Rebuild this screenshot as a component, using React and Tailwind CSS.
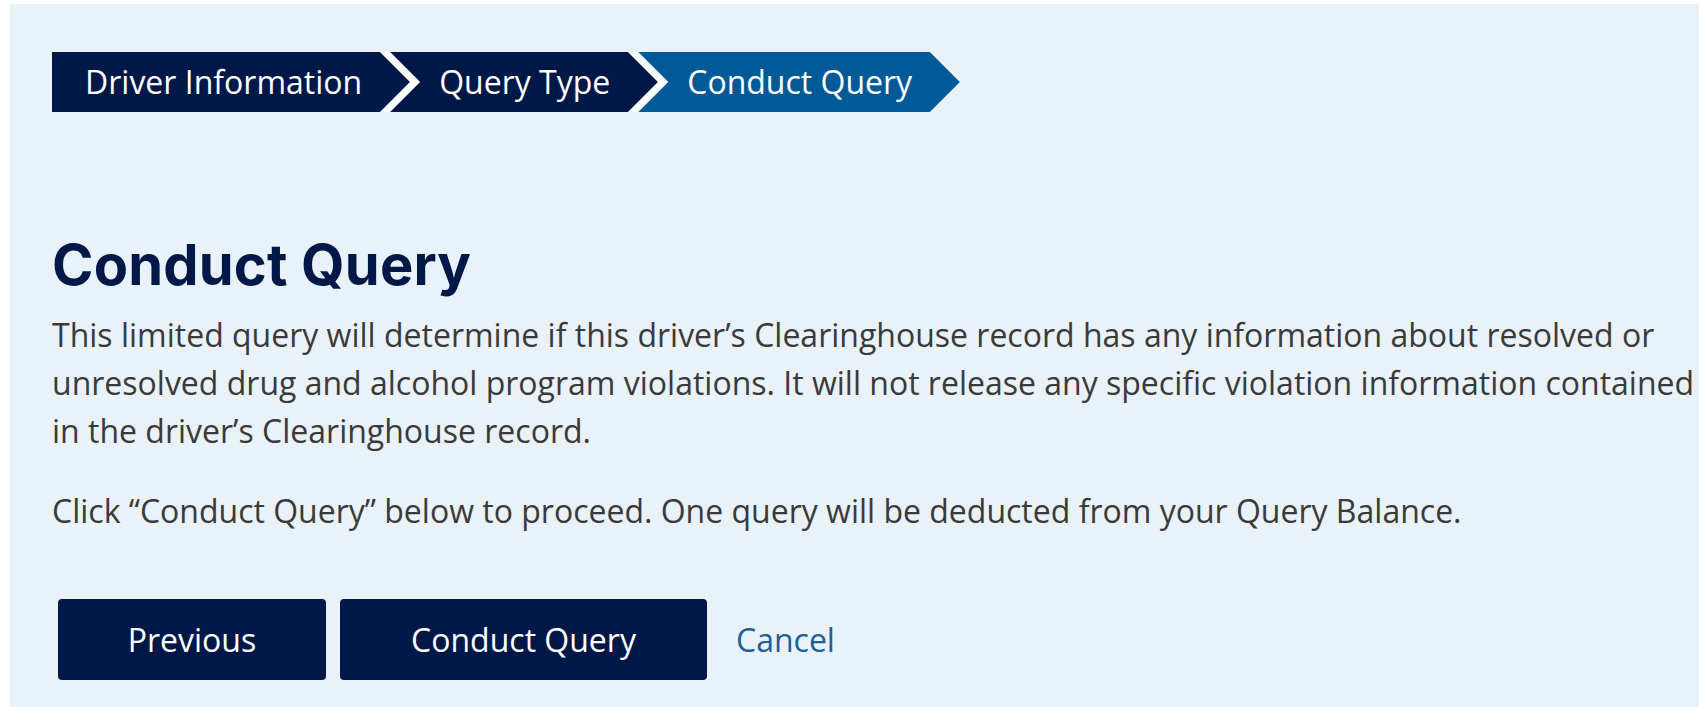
import React from "react";

const steps = [
  { label: "Driver Information", first: true, active: false },
  { label: "Query Type", first: false, active: false },
  { label: "Conduct Query", first: false, active: true },
];

// Arrow shape for a breadcrumb step: flat left edge for the first step,
// notched left edge for the others, pointed tip on the right.
function Step({ label, first, active }) {
  const fill = active ? "bg-[#005a97]" : "bg-[#001847]";
  if (first) {
    return (
      <div
        className={`${fill} h-[60px] flex items-center pl-[33px] pr-[48px] text-white text-[32px] [clip-path:polygon(0_0,calc(100%_-_30px)_0,100%_50%,calc(100%_-_30px)_100%,0_100%)]`}
      >
        <span className="whitespace-nowrap leading-none">{label}</span>
      </div>
    );
  }
  return (
    <div className="-ml-[30px] h-[60px] pl-[10px] bg-white [clip-path:polygon(0_0,calc(100%_-_30px)_0,100%_50%,calc(100%_-_30px)_100%,0_100%,30px_50%)]">
      <div
        className={`${fill} h-full flex items-center pl-[49px] pr-[48px] text-white text-[32px] [clip-path:polygon(0_0,calc(100%_-_30px)_0,100%_50%,calc(100%_-_30px)_100%,0_100%,30px_50%)]`}
      >
        <span className="whitespace-nowrap leading-none">{label}</span>
      </div>
    </div>
  );
}

export default function App() {
  return (
    <div
      className="w-[1699px] h-[707px] overflow-hidden bg-white pt-[4px] pl-[10px]"
      style={{ fontFamily: '"Open Sans", "Noto Sans", sans-serif' }}
    >
      <div className="h-full bg-[#e9f1f9] pl-[42px] pt-[48px]">
        <nav className="flex">
          {steps.map((s) => (
            <Step key={s.label} {...s} />
          ))}
        </nav>

        <h1
          className="mt-[120px] text-[56px] leading-[67px] font-bold text-[#001847] tracking-[0.2px]"
          style={{ fontFamily: 'Inter, "Open Sans", sans-serif' }}
        >
          Conduct Query
        </h1>

        <p className="mt-[12px] w-[1662px] text-[32px] leading-[48px] text-[#3a3a3a]">
          This limited query will determine if this driver’s Clearinghouse record has any
          information about resolved or unresolved drug and alcohol program violations. It
          will not release any specific violation information contained in the driver’s
          Clearinghouse record.
        </p>

        <p className="mt-[32px] text-[32px] leading-[48px] text-[#3a3a3a] whitespace-nowrap">
          Click “Conduct Query” below to proceed. One query will be deducted from your Query
          Balance.
        </p>

        <div className="mt-[64px] ml-[6px] flex items-center">
          <button className="h-[81px] w-[268px] rounded-[4px] bg-[#001847] text-white text-[32px] leading-[48px]">
            Previous
          </button>
          <button className="ml-[14px] h-[81px] w-[367px] rounded-[4px] bg-[#001847] text-white text-[32px] leading-[48px]">
            Conduct Query
          </button>
          <a className="ml-[29px] text-[32px] leading-[48px] text-[#1d5f99] cursor-pointer">
            Cancel
          </a>
        </div>
      </div>
    </div>
  );
}
